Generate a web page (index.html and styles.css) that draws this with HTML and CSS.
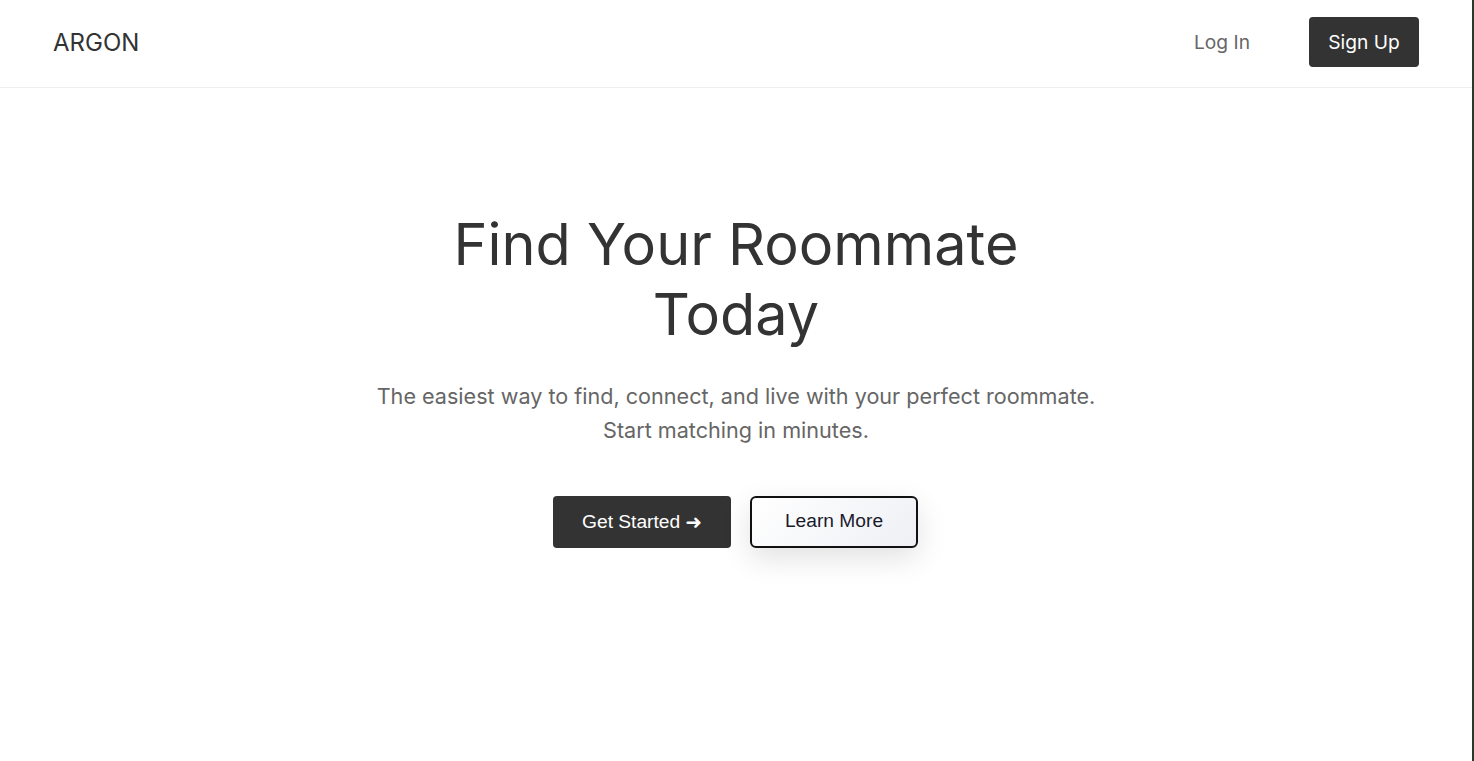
FILE: index.html
```html
<!DOCTYPE html>
<html lang="en">
<head>
<meta charset="utf-8">
<title>Argon</title>
<link rel="stylesheet" href="styles.css">
</head>
<body>
<div class="page">
  <header class="topbar">
    <div class="logo">ARGON</div>
    <nav class="nav">
      <a class="login" href="#">Log In</a>
      <a class="signup" href="#">Sign Up</a>
    </nav>
  </header>
  <main class="hero">
    <h1 class="title">Find Your Roommate Today</h1>
    <p class="lead">The easiest way to find, connect, and live with your perfect roommate. Start matching in minutes.</p>
    <div class="actions">
      <a class="btn btn-primary" href="#">Get Started <span class="arrow">➜</span></a>
      <a class="btn btn-outline" href="#">Learn More</a>
    </div>
  </main>
</div>
</body>
</html>
```
FILE: styles.css
```css
html {
  background: #2c3a2c;
  height: 100%;
}
body {
  margin: 0 2px 0 0;
  min-height: 100%;
  background: #ffffff;
  font-family: Inter, "Noto Sans", sans-serif;
  color: #333333;
}
.page {
  min-height: 761px;
}
.topbar {
  height: 84px;
  padding: 0 53px 3px 53px;
  border-bottom: 1px solid #eeeeee;
  display: flex;
  align-items: center;
  justify-content: space-between;
  box-sizing: content-box;
}
.logo {
  font-size: 24px;
  font-weight: 400;
  color: #333333;
}
.nav {
  display: flex;
  align-items: center;
  gap: 59px;
}
.login {
  font-size: 19.2px;
  color: #666666;
  text-decoration: none;
}
.signup {
  display: flex;
  align-items: center;
  justify-content: center;
  width: 110px;
  height: 50px;
  background: #333333;
  color: #ffffff;
  border-radius: 4px;
  font-size: 19.2px;
  text-decoration: none;
}
.hero {
  display: flex;
  flex-direction: column;
  align-items: center;
  text-align: center;
  padding-top: 121px;
}
.title {
  margin: 0;
  max-width: 640px;
  font-size: 57.6px;
  font-weight: 400;
  line-height: 70px;
  color: #333333;
}
.lead {
  margin: 30px 0 0;
  max-width: 740px;
  font-size: 21.6px;
  line-height: 34px;
  color: #666666;
}
.actions {
  display: flex;
  gap: 19px;
  margin-top: 49px;
  margin-right: 1px;
}
.btn {
  display: flex;
  align-items: center;
  justify-content: center;
  height: 52px;
  box-sizing: border-box;
  font-family: "Liberation Sans", Arial, sans-serif;
  font-size: 19.2px;
  text-decoration: none;
}
.btn-primary {
  width: 178px;
  background: #333333;
  color: #ffffff;
  border-radius: 4px;
  gap: 5px;
}
.arrow {
  font-family: "DejaVu Sans", sans-serif;
  font-size: 20px;
}
.btn-outline {
  width: 168px;
  border: 2px solid #111111;
  border-radius: 6px;
  background: linear-gradient(135deg, #ffffff 0%, #eef0f4 100%);
  color: #1a1a2e;
  box-shadow: 0 10px 30px rgba(0, 0, 0, 0.12);
  padding-bottom: 2px;
}
```
